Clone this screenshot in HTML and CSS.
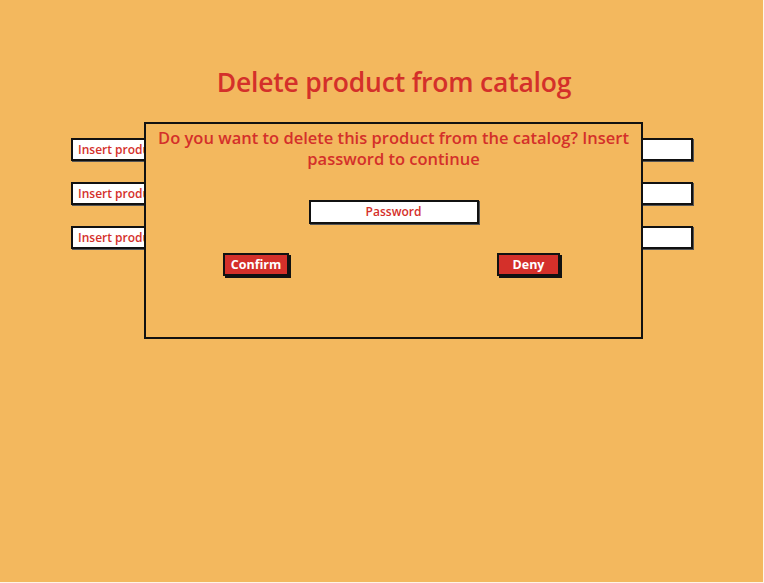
FILE: index.html
```html
<!DOCTYPE html>
<html>
<head>
<meta charset="utf-8">
<link rel="stylesheet" href="styles.css">
</head>
<body>
<div class="page">
  <h1 class="title">Delete product from catalog</h1>
  <div class="form">
    <div class="field">Insert product name</div>
    <div class="field">Insert product price</div>
    <div class="field">Insert product category</div>
  </div>
  <div class="dialog">
    <p class="question">Do you want to delete this product from the catalog? Insert password to continue</p>
    <div class="password">Password</div>
    <div class="actions">
      <button class="btn btn-confirm">Confirm</button>
      <button class="btn btn-deny">Deny</button>
    </div>
  </div>
</div>
</body>
</html>
```

FILE: styles.css
```css
* { box-sizing: border-box; }
html, body { margin: 0; padding: 0; background: #fdf6ea; }
body { font-family: "Open Sans", "Noto Sans", sans-serif; }
.page {
  position: relative;
  width: 763px;
  height: 582px;
  background: #f3b85e;
  padding-top: 64px;
  overflow: hidden;
}
.title {
  margin: 0;
  text-align: center;
  color: #d4302a;
  font-size: 26.5px;
  font-weight: 600;
  line-height: 36px;
  letter-spacing: -0.2px;
  padding-left: 25px;
}
.form {
  margin-top: 38px;
  display: flex;
  flex-direction: column;
  gap: 21px;
  padding-left: 71px;
}
.field {
  width: 622px;
  height: 23px;
  background: #fff;
  border: 2px solid #111;
  box-shadow: 1px 1px 0 #555;
  color: #d4302a;
  font-size: 12px;
  font-weight: 600;
  line-height: 19px;
  padding-left: 5px;
  white-space: nowrap;
}
.dialog {
  position: absolute;
  left: 144px;
  top: 122px;
  width: 499px;
  height: 217px;
  background: #f3b85e;
  border: 2px solid #111;
  display: flex;
  flex-direction: column;
  align-items: center;
}
.question {
  margin: 3px 0 0;
  text-align: center;
  color: #d4302a;
  font-size: 16.5px;
  font-weight: 600;
  line-height: 21px;
  padding: 0 6px;
}
.password {
  margin-top: 31px;
  width: 170px;
  height: 24px;
  background: #fff;
  border: 2px solid #111;
  box-shadow: 1px 1px 0 #555;
  color: #d4302a;
  font-size: 12px;
  font-weight: 600;
  line-height: 20px;
  text-align: center;
}
.actions {
  margin-top: 29px;
  width: 100%;
  display: flex;
  justify-content: space-between;
  padding: 0 81px 0 77px;
}
.btn {
  height: 23px;
  background: #d4302a;
  color: #fff;
  border: 2px solid #111;
  box-shadow: 2px 2px 0 #111;
  font-family: "Open Sans", "Noto Sans", sans-serif;
  font-size: 12.5px;
  font-weight: 700;
  padding: 0;
  line-height: 18px;
  text-align: center;
}
.btn-confirm { width: 66px; }
.btn-deny { width: 63px; }
```
